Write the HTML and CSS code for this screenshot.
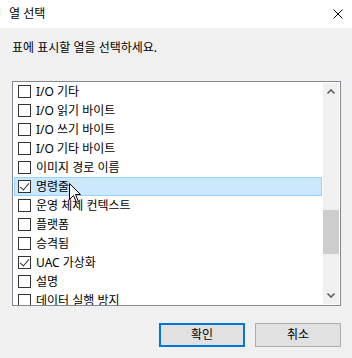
FILE: index.html
```html
<!DOCTYPE html>
<html lang="ko">
<head>
  <meta charset="UTF-8">
  <title>열 선택</title>
  <link rel="stylesheet" href="styles.css">
</head>
<body>
  <div class="dialog">
    <div class="titlebar">
      <span class="title">열 선택</span>
      <svg class="close" width="10" height="10" viewBox="0 0 10 10">
        <path d="M0.5 0.5 L9.5 9.5 M9.5 0.5 L0.5 9.5" stroke="#000" stroke-width="1" fill="none"/>
      </svg>
    </div>

    <p class="prompt">표에 표시할 열을 선택하세요.</p>

    <div class="list">
      <div class="rows">
        <div class="row"><span class="box"></span><span>I/O 기타</span></div>
        <div class="row"><span class="box"></span><span>I/O 읽기 바이트</span></div>
        <div class="row"><span class="box"></span><span>I/O 쓰기 바이트</span></div>
        <div class="row"><span class="box"></span><span>I/O 기타 바이트</span></div>
        <div class="row"><span class="box"></span><span>이미지 경로 이름</span></div>
        <div class="row selected"><span class="box checked"></span><span>명령줄</span></div>
        <div class="row"><span class="box"></span><span>운영 체제 컨텍스트</span></div>
        <div class="row"><span class="box"></span><span>플랫폼</span></div>
        <div class="row"><span class="box"></span><span>승격됨</span></div>
        <div class="row"><span class="box checked"></span><span>UAC 가상화</span></div>
        <div class="row"><span class="box"></span><span>설명</span></div>
        <div class="row"><span class="box"></span><span>데이터 실행 방지</span></div>
      </div>
      <div class="scrollbar">
        <svg class="arrow" width="16" height="17" viewBox="0 0 16 17">
          <path d="M4.5 10.5 L8 7 L11.5 10.5" stroke="#606060" stroke-width="1.6" fill="none"/>
        </svg>
        <div class="track">
          <div class="thumb"></div>
        </div>
        <svg class="arrow" width="16" height="17" viewBox="0 0 16 17">
          <path d="M4.5 6.5 L8 10 L11.5 6.5" stroke="#606060" stroke-width="1.6" fill="none"/>
        </svg>
      </div>
    </div>

    <div class="buttons">
      <button class="btn default">확인</button>
      <button class="btn">취소</button>
    </div>

    <svg class="cursor" width="13" height="21" viewBox="0 0 13 21">
      <path d="M0.5 0.5 L0.5 16.5 L4.5 12.5 L7.5 19.5 L9.5 18.5 L6.5 11.5 L11.5 11.5 Z" fill="#fff" stroke="#000" stroke-width="1"/>
    </svg>
  </div>
</body>
</html>
```

FILE: styles.css
```css
* {
  box-sizing: border-box;
}

body {
  margin: 0;
  background-color: #f0f0f0;
  font-family: "Noto Sans", "Noto Sans CJK KR", sans-serif;
  font-size: 12px;
  color: #000;
}

.dialog {
  position: relative;
  width: 352px;
  height: 358px;
  overflow: hidden;
}

.titlebar {
  height: 28px;
  background-color: #fff;
  display: flex;
  align-items: center;
  justify-content: space-between;
  padding: 0 9px 0 9px;
}

.title {
  line-height: 16px;
}

.close {
  display: block;
  margin-top: -1px;
}

.prompt {
  margin: 0;
  padding: 12px 12px 0 12px;
  height: 53px;
  line-height: 16px;
}

.list {
  display: flex;
  margin-left: 12px;
  width: 329px;
  height: 225px;
  border: 1px solid #828790;
  background-color: #fff;
}

.rows {
  width: 309px;
  overflow: hidden;
}

.row {
  display: flex;
  align-items: center;
  gap: 5px;
  height: 19px;
  margin-left: 1px;
  padding-left: 3px;
  border: 1px solid transparent;
  line-height: 16px;
  white-space: nowrap;
}

.row.selected {
  background-color: #cce8ff;
  border-color: #99d1ff;
}

.box {
  width: 13px;
  height: 13px;
  border: 1px solid #333;
  background-color: #fff;
  flex-shrink: 0;
  position: relative;
}

.box.checked::after {
  content: "";
  position: absolute;
  left: 3px;
  top: 0;
  width: 4px;
  height: 8px;
  border-right: 1px solid #333;
  border-bottom: 1px solid #333;
  transform: rotate(40deg);
}

.scrollbar {
  display: flex;
  flex-direction: column;
  width: 16px;
  margin: 1px 0 1px 1px;
  background-color: #f0f0f0;
}

.arrow {
  display: block;
  flex-shrink: 0;
}

.track {
  flex: 1;
  padding-top: 110px;
}

.thumb {
  height: 44px;
  background-color: #cdcdcd;
}

.buttons {
  display: flex;
  justify-content: flex-end;
  gap: 10px;
  padding: 17px 11px 0 0;
}

.btn {
  width: 86px;
  height: 24px;
  padding: 0;
  background-color: #e1e1e1;
  border: 1px solid #adadad;
  font-family: "Noto Sans", "Noto Sans CJK KR", sans-serif;
  font-size: 12px;
  line-height: 16px;
  color: #000;
}

.btn.default {
  border: 2px solid #0078d7;
}

.cursor {
  position: absolute;
  left: 69px;
  top: 183px;
}
```
